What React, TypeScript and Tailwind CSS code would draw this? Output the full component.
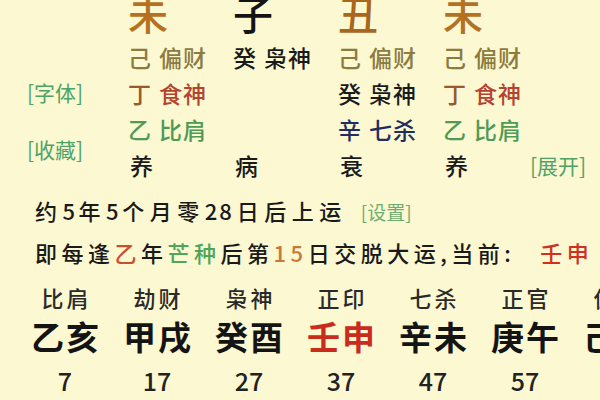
import React from "react";

type Cell = { s: string; sc: string; g: string; gc: string } | null;

const cols: { big: string; bc: string; cells: Cell[]; bottom: string }[] = [
  {
    big: "未",
    bc: "text-[#b5711f]",
    cells: [
      { s: "己", sc: "text-[#8c7b3f]", g: "偏财", gc: "text-[#8c7b3f]" },
      { s: "丁", sc: "text-[#98592c]", g: "食神", gc: "text-[#b5432f]" },
      { s: "乙", sc: "text-[#4f9a55]", g: "比肩", gc: "text-[#4f9a55]" },
    ],
    bottom: "养",
  },
  {
    big: "子",
    bc: "text-[#141414]",
    cells: [{ s: "癸", sc: "text-[#1a1a1a]", g: "枭神", gc: "text-[#1a1a1a]" }, null, null],
    bottom: "病",
  },
  {
    big: "丑",
    bc: "text-[#a9661d]",
    cells: [
      { s: "己", sc: "text-[#8c7b3f]", g: "偏财", gc: "text-[#8c7b3f]" },
      { s: "癸", sc: "text-[#1a1a1a]", g: "枭神", gc: "text-[#1a1a1a]" },
      { s: "辛", sc: "text-[#1f2d60]", g: "七杀", gc: "text-[#1f2d60]" },
    ],
    bottom: "衰",
  },
  {
    big: "未",
    bc: "text-[#b5711f]",
    cells: [
      { s: "己", sc: "text-[#8c7b3f]", g: "偏财", gc: "text-[#8c7b3f]" },
      { s: "丁", sc: "text-[#98592c]", g: "食神", gc: "text-[#b5432f]" },
      { s: "乙", sc: "text-[#4f9a55]", g: "比肩", gc: "text-[#4f9a55]" },
    ],
    bottom: "养",
  },
];

const dayun = [
  { god: "比肩", gz: "乙亥", age: "7", red: false },
  { god: "劫财", gz: "甲戌", age: "17", red: false },
  { god: "枭神", gz: "癸酉", age: "27", red: false },
  { god: "正印", gz: "壬申", age: "37", red: true },
  { god: "七杀", gz: "辛未", age: "47", red: false },
  { god: "正官", gz: "庚午", age: "57", red: false },
  { god: "偏印", gz: "己巳", age: "67", red: false },
];

export default function App() {
  return (
    <div className="w-[600px] h-[400px] overflow-hidden bg-[#fbf8d2] font-['Noto_Sans_CJK_SC','Noto_Sans',sans-serif] font-medium text-[#1a1a1a]">
      {/* top pillars */}
      <div className="flex mt-[-7px]">
        <div className="w-[128px] pl-[27px] flex flex-col text-[21px] font-normal text-[#4fa366]">
          <div className="mt-[81px] h-[36px] leading-[36px]">[字体]</div>
          <div className="mt-[21px] h-[36px] leading-[36px]">[收藏]</div>
        </div>
        {cols.map((c, i) => (
          <div key={i} className={`${i === 3 ? "w-[87px]" : "w-[105px]"} flex flex-col`}>
            <div className={`h-[40px] leading-[40px] text-[40px] mb-[6px] ${c.bc}`}>{c.big}</div>
            {c.cells.map((cell, j) => (
              <div key={j} className="h-[36px] leading-[36px] text-[23px] flex gap-[8px] whitespace-nowrap">
                {cell && (
                  <>
                    <span className={cell.sc}>{cell.s}</span>
                    <span className={`${cell.gc} tracking-[1px]`}>{cell.g}</span>
                  </>
                )}
              </div>
            ))}
            <div className="h-[36px] leading-[36px] text-[23px] pl-[2px]">{c.bottom}</div>
          </div>
        ))}
        <div className="flex-1 flex flex-col justify-end">
          <div className="h-[36px] leading-[36px] text-[21px] font-normal text-[#4fa366] whitespace-nowrap">[展开]</div>
        </div>
      </div>

      {/* lines */}
      <div className="pl-[35px] whitespace-nowrap">
        <div className="mt-[7px] h-[40px] leading-[40px] text-[22px] tracking-[5.5px]">
          约<span className="tracking-[3.5px]">5</span>年<span className="tracking-[3.5px]">5</span>个月零<span className="tracking-[2px]">2</span><span className="tracking-[5px]">8</span>日后上运
          <span className="ml-[14px] text-[19px] font-normal tracking-normal text-[#6fae6f]">[设置]</span>
        </div>
        <div className="mt-[2px] h-[40px] leading-[40px] text-[22px] tracking-[4.5px]">
          即每逢<span className="text-[#c9502e]">乙</span>年
          <span className="text-[#4fa55a]">芒种</span>后第
          <span className="text-[#c8783a]">15</span>日交脱大运,当前:
          <span className="ml-[25px] text-[#d0301d]">壬申</span>
        </div>
      </div>

      {/* dayun */}
      <div className="flex ml-[19px] mt-[8px] whitespace-nowrap">
        {dayun.map((d, i) => (
          <div key={i} className="w-[92px] shrink-0 flex flex-col items-center">
            <div className="h-[34px] leading-[34px] text-[22px] tracking-[3px] pl-[3px] text-[#2a2a2a]">{d.god}</div>
            <div
              className={`h-[44px] leading-[44px] text-[33px] font-bold tracking-[2px] pl-[2px] ${
                d.red ? "text-[#c92b1c]" : "text-[#141414]"
              }`}
            >
              {d.gz}
            </div>
            <div className="mt-[2px] h-[40px] leading-[40px] text-[25px] text-[#222]">{d.age}</div>
          </div>
        ))}
      </div>
    </div>
  );
}
